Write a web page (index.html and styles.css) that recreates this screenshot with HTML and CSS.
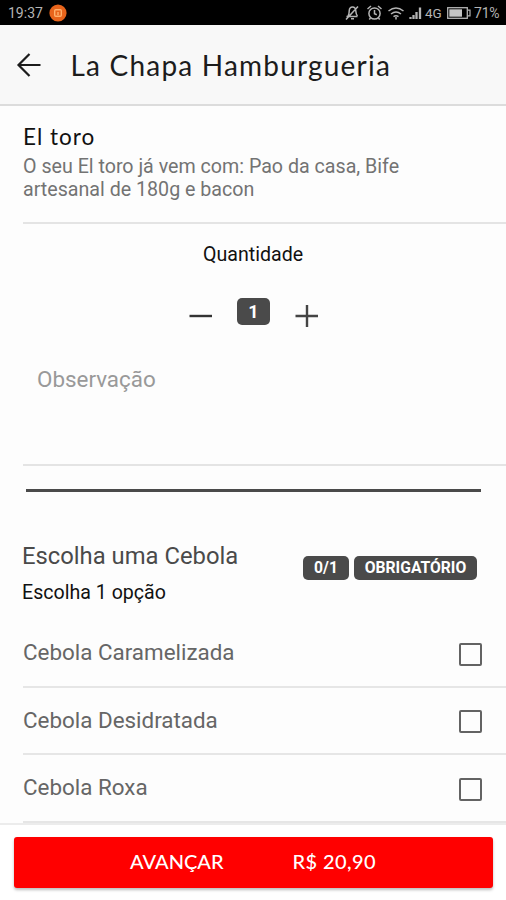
FILE: index.html
```html
<!DOCTYPE html>
<html lang="pt-BR">
<head>
<meta charset="utf-8">
<title>La Chapa Hamburgueria</title>
<link rel="stylesheet" href="styles.css">
</head>
<body>
<div class="status">
  <span class="clock">19:37</span>
  <svg class="app-dot" width="18" height="18" viewBox="0 0 18 18"><circle cx="9" cy="9" r="8.6" fill="#e8641b"/><rect x="5.7" y="5.7" width="6.6" height="6.6" rx="1" fill="none" stroke="#ffb06c" stroke-width="1.4"/><path d="M9 8v3" stroke="#ffb06c" stroke-width="1.4"/></svg>
  <svg class="indicators" width="78" height="18" viewBox="0 0 78 18" fill="none" stroke="#b4b4b4" stroke-width="1.5">
    <path d="M1.500 12.500h11M3 12c1.200-1.500 1-3 1.200-5C4.600 1.800 10.400 1.800 10.800 7c.1 2 .3 3.500 1.700 5M6 14.800h3M13 2.500L1 15.500"/>
    <circle cx="29.500" cy="9.500" r="5.600"/><path d="M29.500 6v3.700l2.300 1M22.500 5l3.500-3M36.500 5l-3.500-3M25.500 14l-1.200 1.500M33.500 14l1.200 1.500"/>
    <path d="M43.500 7q7.500-6 15 0M46 10q5-4 10 0M48.500 12.700q2.500-2 5 0M51 13v2.500"/>
    <path d="M65.500 15v-2M68.500 15v-4M71.500 15V8M75 15V3.500" stroke-width="2.300"/>
  </svg>
  <span class="network">4G</span>
  <svg class="battery" width="24" height="12" viewBox="0 0 24 12"><rect x=".7" y=".7" width="19.600" height="10.600" fill="none" stroke="#b4b4b4" stroke-width="1.300"/><path d="M2.300 2.300h12.700v7.400H2.300z" fill="#c4c4c4"/><path d="M21 3.200h2v5.600h-2" fill="none" stroke="#b4b4b4" stroke-width="1.200"/></svg>
  <span class="percent">71%</span>
</div>
<header class="bar">
  <svg width="26" height="26" viewBox="0 0 26 26" fill="none" stroke="#1c1c1c" stroke-width="2.200"><path d="M24.500 13H2.500M13.500 2L2.500 13l11 11"/></svg>
  <h1>La Chapa Hamburgueria</h1>
</header>
<main>
  <section class="product">
    <h2>El toro</h2>
    <p>O seu El toro já vem com: Pao da casa, Bife<br>artesanal de 180g e bacon</p>
  </section>
  <section class="quantity">
    <div class="label">Quantidade</div>
    <div class="stepper">
      <svg width="24" height="24" viewBox="0 0 24 24" stroke="#333" stroke-width="2.400"><path d="M.5 12h22.500"/></svg>
      <span class="badge count">1</span>
      <svg width="24" height="24" viewBox="0 0 24 24" stroke="#444" stroke-width="2.400"><path d="M.5 12h22.500M12 1v22"/></svg>
    </div>
    <div class="note">Observação</div>
  </section>
  <div class="rule"></div>
  <section class="group">
    <div class="group-text"><h3>Escolha uma Cebola</h3><p>Escolha 1 opção</p></div>
    <span class="badge tally">0/1</span>
    <span class="badge required">OBRIGATÓRIO</span>
  </section>
  <div class="option"><span>Cebola Caramelizada</span><i class="check"></i></div>
  <div class="option"><span>Cebola Desidratada</span><i class="check"></i></div>
  <div class="option"><span>Cebola Roxa</span><i class="check"></i></div>
</main>
<footer>
  <div class="action"><span class="next">AVANÇAR</span><span class="price">R$ 20,90</span></div>
</footer>
</body>
</html>
```
FILE: styles.css
```css
* { box-sizing: border-box; }
body { margin: 0; width: 506px; height: 900px; overflow: hidden; background: #fdfdfd; font-family: Roboto, sans-serif; color: #111; }
h1, h2, h3, p { margin: 0; font-weight: 400; white-space: nowrap; }
svg { display: block; flex: none; }
span { white-space: nowrap; }
.status { display: flex; align-items: center; height: 25px; padding: 1px 0 0 8px; background: #000; color: #b4b4b4; font-size: 14px; }
.clock { flex: none; width: 41px; }
.indicators { margin-left: 278px; }
.network { flex: none; width: 22px; margin-left: 2px; font-size: 13.500px; }
.percent { margin-left: 3px; letter-spacing: -0.2px; }
.bar { display: flex; align-items: center; height: 81px; padding-left: 16px; background: #f8f8f8; border-bottom: 2px solid #dcdcdc; }
.bar h1 { margin-left: 28.500px; padding-top: 1px; font-family: Lato, sans-serif; font-size: 28px; letter-spacing: 1.200px; color: #1c1c1c; }
.product { height: 118px; margin-left: 23px; padding-top: 17px; border-bottom: 2px solid #e4e4e4; }
.product h2 { font-family: Lato, sans-serif; font-size: 22.500px; line-height: 28px; letter-spacing: 1px; }
.product p { margin-top: 4px; font-size: 19.650px; line-height: 23px; color: #737373; }
.quantity { height: 242px; margin-left: 23px; border-bottom: 2px solid #e4e4e4; }
.label { padding: 19px 0 0 180px; font-size: 19.600px; line-height: 24px; }
.stepper { display: flex; align-items: center; margin: 37px 0 0 166px; height: 24px; }
.badge { display: flex; flex: none; justify-content: center; align-items: center; background: #4a4a4a; color: #fff; font-weight: 700; border-radius: 5px; }
.count { width: 33px; height: 27px; margin: -10px 25px 0 24px; font-size: 18px; }
.note { margin: 37px 0 0 14px; font-size: 22.400px; line-height: 28px; color: #999; }
.rule { height: 3px; margin: 23px 25px 0 26px; background: #4a4a4a; }
.group { display: flex; height: 128px; padding: 49px 29px 0 22px; }
.group-text { flex: 1; }
.group h3 { font-size: 23.800px; line-height: 30px; color: #4a4a4a; }
.group p { margin-top: 10px; font-size: 19.600px; line-height: 24px; }
.tally, .required { height: 24px; margin-top: 15px; padding-bottom: 1px; font-size: 15.700px; }
.tally { width: 46px; }
.required { width: 123px; margin-left: 5px; }
.option { display: flex; justify-content: space-between; align-items: center; height: 67.500px; margin-left: 23px; padding-right: 24px; border-bottom: 2px solid #e6e6e6; font-size: 22.400px; color: #666; }
.option span { margin-top: -1px; }
.check { width: 23px; height: 23px; margin-top: 3px; border: 2px solid #636363; border-radius: 2px; }
footer { height: 78px; padding: 12px 13px 0 14px; background: #fff; border-top: 2px solid #ececec; }
.action { display: flex; align-items: center; height: 51px; padding: 0 0 3px 116px; background: #f00; border-radius: 3px; box-shadow: 0 2px 3px #0004; color: #fff; font: 500 20px Lato, sans-serif; }
.price { margin-left: 69px; letter-spacing: .4px; }
```
